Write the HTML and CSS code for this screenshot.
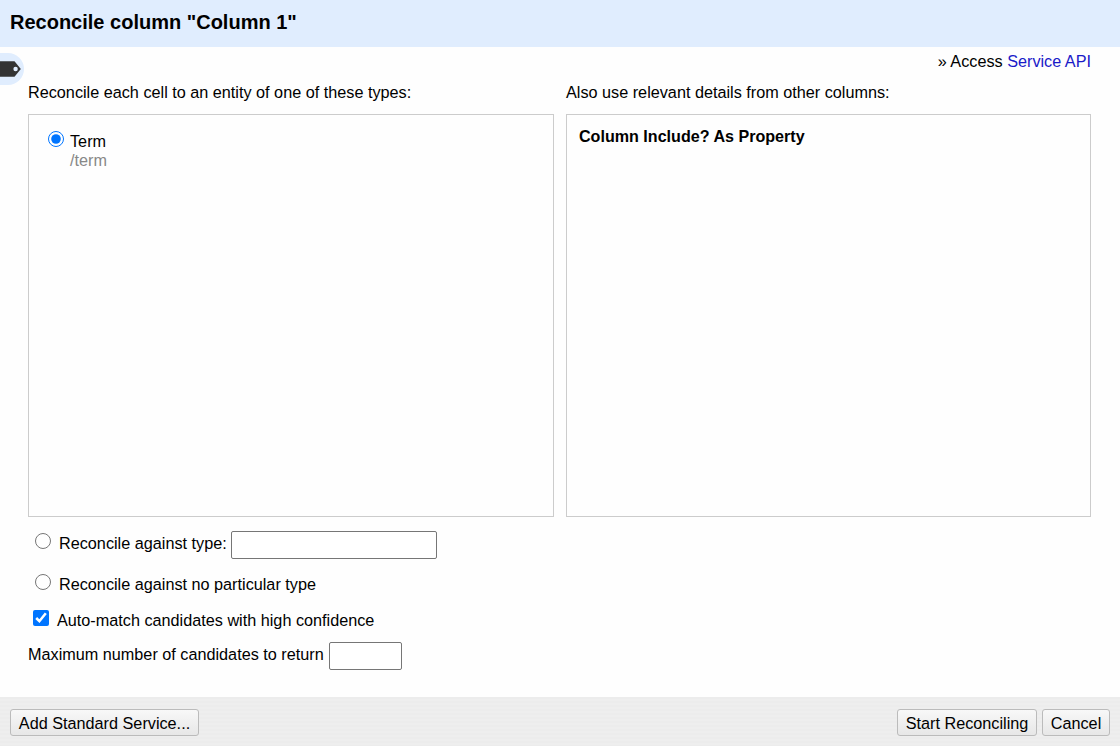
FILE: index.html
```html
<!DOCTYPE html>
<html lang="en">
<head>
<meta charset="utf-8">
<title>Reconcile column</title>
<link rel="stylesheet" href="styles.css">
</head>
<body>
<div class="dialog">
  <header class="dialog-header"><h1>Reconcile column "Column 1"</h1></header>
  <main class="dialog-body">
    <svg class="tag-handle" width="24" height="32" viewBox="0 0 24 32">
      <path d="M0 0H8A16 16 0 0 1 8 32H0Z" fill="#e0edfe"/>
      <path d="M0 8.3H14.5L20.8 16L14.5 23.7H0Z" fill="#333"/>
      <circle cx="15.6" cy="16" r="2.2" fill="#e0edfe"/>
    </svg>
    <p class="service">» Access <a class="service-link">Service API</a></p>
    <div class="columns">
      <section class="column">
        <p class="column-label">Reconcile each cell to an entity of one of these types:</p>
        <div class="box types">
          <input class="choice" type="radio" name="type" id="term" checked>
          <label class="type-name" for="term">Term<span class="type-id">/term</span></label>
        </div>
      </section>
      <section class="column">
        <p class="column-label">Also use relevant details from other columns:</p>
        <div class="box details">Column Include? As Property</div>
      </section>
    </div>
    <div class="options">
      <div class="row row-type"><input class="choice" type="radio" name="type" id="other"><label for="other">Reconcile against type:</label><input class="field type-field" type="text"></div>
      <div class="row row-none"><input class="choice" type="radio" name="type" id="none"><label for="none">Reconcile against no particular type</label></div>
      <div class="row row-auto"><input class="choice" type="checkbox" id="auto" checked><label for="auto">Auto-match candidates with high confidence</label></div>
      <div class="row row-max"><label for="max">Maximum number of candidates to return</label><input class="field max-field" type="text" id="max"></div>
    </div>
  </main>
  <footer class="dialog-footer">
    <button class="button add">Add Standard Service...</button>
    <button class="button start">Start Reconciling</button>
    <button class="button cancel">Cancel</button>
  </footer>
</div>
</body>
</html>
```
FILE: styles.css
```css
* { box-sizing: border-box; }
body {
  margin: 0;
  background: #fefefe;
  color: #000;
  font: 16.23px/20px "Liberation Sans", Arial, sans-serif;
}
p, h1 { margin: 0; }
.dialog { height: 746px; display: flex; flex-direction: column; overflow: hidden; }
.dialog-header { height: 47px; padding: 10px; background: #e0edfe; }
.dialog-header h1 { font-size: 20px; line-height: 24px; }
.dialog-body { position: relative; flex: 1; padding: 4px 29px 0 28px; }
.tag-handle { position: absolute; left: 0; top: 6px; }
.service { text-align: right; }
.service-link { color: #1a1ac8; }
.columns { display: grid; grid-template-columns: 526px 525px; gap: 12px; margin-top: 11px; }
.column-label { height: 32px; }
.box { height: 403px; border: 1px solid #ccc; }
.types { display: flex; padding: 16px 19px; }
.choice { flex: none; width: 16px; height: 16px; margin: 0; accent-color: #0075ff; }
.type-name { margin: 1px 0 0 6px; line-height: 19px; }
.type-id { display: block; color: #888; }
.details { padding: 11px 12px; font-size: 16.1px; font-weight: bold; }
.row { display: flex; align-items: center; }
.row-type { height: 28px; margin-top: 14px; padding-left: 7px; }
.row-none { height: 20px; margin-top: 15px; padding-left: 7px; }
.row-auto { height: 20px; margin-top: 16px; padding-left: 5px; }
.row-max { height: 28px; margin-top: 12px; }
.row .choice { margin-right: 8px; transform: translateY(-2px); }
.row-type label, .row-max label { margin-top: -4px; }
.row-type .choice { transform: translateY(-4px); }
.field { height: 28px; border: 1px solid #767676; border-radius: 2px; background: #fff; padding: 2px; }
.type-field { width: 206px; margin-left: 4px; }
.max-field { width: 73px; margin-left: 5px; }
.dialog-footer {
  height: 49px;
  display: flex;
  align-items: flex-start;
  gap: 5px;
  padding: 12px 10px;
  background: repeating-linear-gradient(#ececec 0 2px, #eee 2px 4px);
}
.button {
  height: 27px;
  padding: 1px 0 0;
  border: 1px solid #bbb;
  border-radius: 3px;
  background: linear-gradient(#f8f8f8, #e7e7e7);
  color: #000;
  font: inherit;
  white-space: nowrap;
}
.add { width: 189px; margin-right: auto; }
.start { width: 140px; }
.cancel { width: 68px; }
```
